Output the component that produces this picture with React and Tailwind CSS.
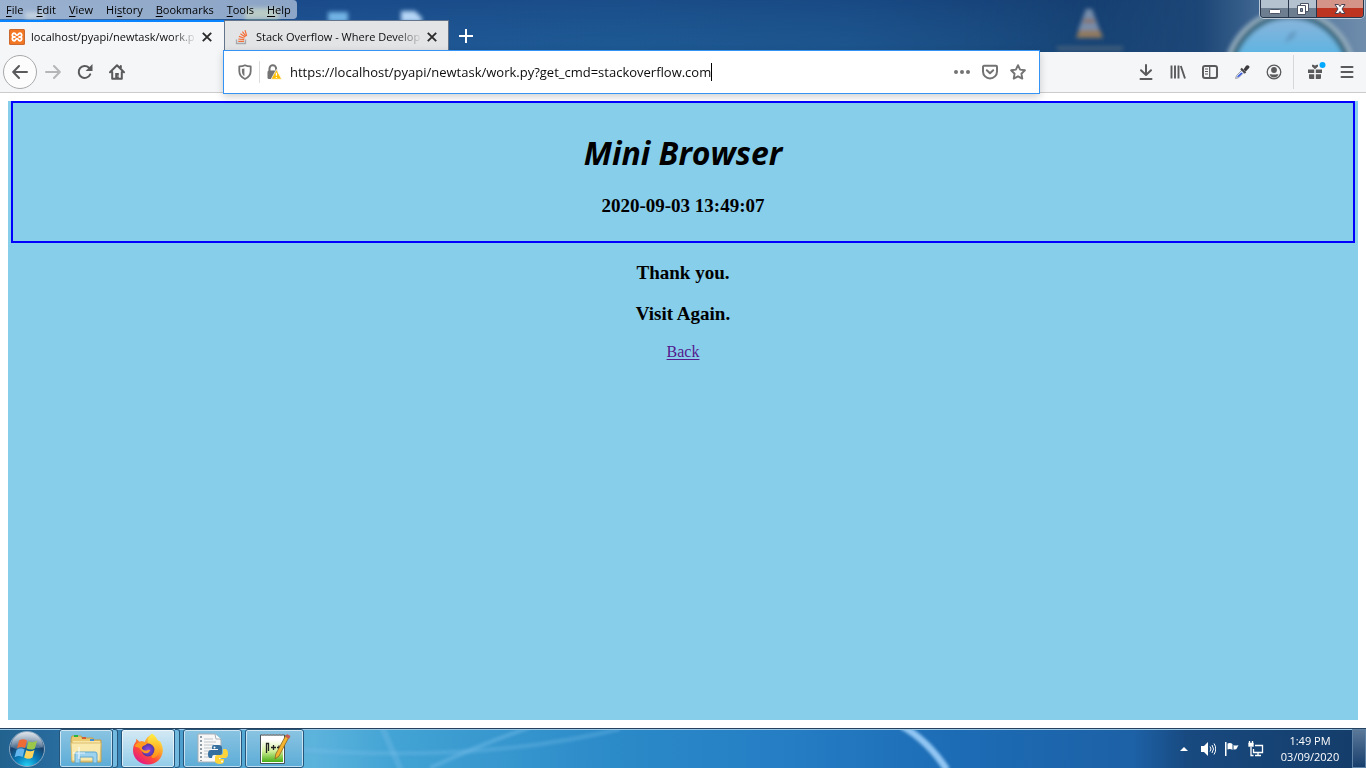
const menus = ['File', 'Edit', 'View', 'History', 'Bookmarks', 'Tools', 'Help'];
const hotkeys = [0, 0, 0, 2, 0, 0, 0];

function TitleWallpaper() {
  return (
    <svg className="absolute inset-0 h-full w-full" viewBox="0 0 1366 52" preserveAspectRatio="none" aria-hidden="true">
      <defs>
        <linearGradient id="sky" x1="0" x2="1" y1="0" y2="0">
          <stop offset="0" stopColor="#4f7eb4" />
          <stop offset="0.2" stopColor="#1d4f90" />
          <stop offset="0.45" stopColor="#1c548f" />
          <stop offset="0.62" stopColor="#1b4f88" />
          <stop offset="0.8" stopColor="#164071" />
          <stop offset="0.88" stopColor="#1d4777" />
          <stop offset="0.94" stopColor="#50759d" />
          <stop offset="1" stopColor="#6f8cab" />
        </linearGradient>
        <linearGradient id="shade" x1="0" x2="0" y1="0" y2="1">
          <stop offset="0" stopColor="#143a78" stopOpacity="0.25" />
          <stop offset="1" stopColor="#2a7ab0" stopOpacity="0.15" />
        </linearGradient>
        <linearGradient id="shadeFade" x1="0" x2="1" y1="0" y2="0">
          <stop offset=".8" stopColor="#fff" />
          <stop offset="1" stopColor="#000" />
        </linearGradient>
        <mask id="shadeMask"><rect width="1200" height="52" fill="url(#shadeFade)" /></mask>
        <linearGradient id="glass" x1="0" x2="0" y1="0" y2="1">
          <stop offset="0" stopColor="#8db5dc" />
          <stop offset=".35" stopColor="#5ab4e2" />
          <stop offset="1" stopColor="#4aaee0" />
        </linearGradient>
        <filter id="soft" x="-30%" y="-30%" width="160%" height="160%"><feGaussianBlur stdDeviation="2" /></filter>
      </defs>
      <rect width="1366" height="52" fill="url(#sky)" />
      <rect width="1200" height="52" fill="url(#shade)" mask="url(#shadeMask)" />
      <g filter="url(#soft)">
        <rect x="328" y="12" width="20" height="10" fill="#72b3e4" />
        <path d="M401 11h14l7 7v4h-21z" fill="#b5d5f5" />
        <rect x="25" y="12" width="20" height="7" fill="#b3c9d4" />
        <rect x="245" y="8" width="34" height="11" fill="#9cb98b" />
        <g opacity=".8">
          <path d="M1086 9h6l8 22h-22z" fill="#8fa1b9" />
          <path d="M1084 19h10l2 4h-14z" fill="#a57e5d" />
          <path d="M1079 30h21l3 8h-27z" fill="#b18a5c" />
        </g>
        <rect x="1057" y="46" width="66" height="5" fill="#3e5c7a" />
        <circle cx="1290" cy="75" r="59" fill="url(#glass)" stroke="#3d6c83" strokeWidth="6" />
        <circle cx="1290" cy="75" r="64" fill="none" stroke="#99b1c0" strokeWidth="4" />
        <path d="M1284 43l6-10 7-3-3 8z" fill="#5b8fb6" opacity=".7" />
      </g>
    </svg>
  );
}

function WindowControls() {
  return (
    <div className="ml-auto mr-0.5 flex h-[18px] w-[104px] overflow-hidden rounded-b-[4px] border border-t-0 border-[#28374c] shadow-[0_0_0_1px_#b9c7d6]">
      <button aria-label="Minimize" className="flex w-7 items-center justify-center border-r border-[#28374c] bg-linear-to-b from-[#b4c1ce] from-45% to-[#6d7e91] to-50%">
        <svg width="14" height="14" viewBox="0 0 14 14"><rect x="1.500" y="7.500" width="11" height="4" rx="1" fill="#fff" stroke="#4b5566" /></svg>
      </button>
      <button aria-label="Restore" className="flex w-7 items-center justify-center border-r border-[#28374c] bg-linear-to-b from-[#b4c1ce] from-45% to-[#6d7e91] to-50%">
        <svg width="14" height="14" viewBox="0 0 14 14" stroke="#4b5566"><path d="M4.500 1.500h8v8h-8z" fill="#fff" /><path d="M1.500 3.500h8v9h-8z" fill="#fff" /><path d="M4.500 6.500h2v3h-2z" fill="#8593a5" /></svg>
      </button>
      <button aria-label="Close window" className="flex flex-1 items-center justify-center bg-linear-to-b from-[#d59488] from-45% to-[#bd3520] to-50%">
        <svg width="14" height="14" viewBox="0 0 14 14"><path d="M2 2.500h3.500l1.500 2 1.500-2H12L9 7l3 4.500H8.500L7 9.500l-1.500 2H2L5 7z" fill="#fff" stroke="#4a4250" /></svg>
      </button>
    </div>
  );
}

function CloseIcon() {
  return <svg width="12" height="12" viewBox="0 0 12 12"><path d="M1.800 1.800l8.400 8.400M10.200 1.800l-8.400 8.400" stroke="#2b2b2c" strokeWidth="1.900" /></svg>;
}

function XamppIcon() {
  return (
    <svg className="shrink-0" width="16" height="16" viewBox="0 0 16 16">
      <rect width="16" height="16" rx="1.500" fill="#f37623" />
      <rect x=".5" y=".5" width="15" height="15" rx="1.500" fill="none" stroke="#c96a35" />
      <path d="M5 4.200a2 2 0 0 0-1.200 3.300M11 4.200a2 2 0 0 1 1.200 3.300M5 11.800a2 2 0 0 1-1-3.500M11 11.800a2 2 0 0 0 1-3.500M5 4.200c1.600 0 1.600 2 3 2s1.400-2 3-2M5 11.800c1.600 0 1.600-2.200 3-2.200s1.400 2.200 3 2.200M3.900 8H6M10 8h2.100" fill="none" stroke="#fff" strokeWidth="1.800" strokeLinecap="round" />
    </svg>
  );
}

function StackIcon() {
  return (
    <svg className="shrink-0" width="16" height="16" viewBox="0 0 16 16" fill="none">
      <path d="M2.500 10.500v4h9v-4" stroke="#a6a8ab" strokeWidth="1.300" />
      <path d="M4.200 12.300h5.900M4.300 10l5.900.6M4.900 7.400l5.600 1.900M6.400 4.700l4.800 3.400M8.400 2.600l3.600 4.700M11 1.200l1.700 5.600" stroke="#f4703a" strokeWidth="1.200" />
    </svg>
  );
}

function Tab({ title, icon, active }) {
  return (
    <div className={active
      ? 'flex h-8 w-56 items-center border-t-2 border-[#0a84ff] bg-[#f5f6f7] pl-[9px] pr-[11px]'
      : 'flex h-8 w-[225px] items-center border-x border-t border-[#64748b] bg-[#e3e4e6] pl-[9px] pr-2.5'}>
      {icon}
      <button role="tab" aria-selected={active} className="ml-1.5 flex-1 overflow-hidden whitespace-nowrap text-left text-[11px] leading-4 text-[#0c0c0d] mask-r-from-85% mask-r-to-100%">{title}</button>
      <button aria-label={`Close ${title}`} className="ml-1"><CloseIcon /></button>
    </div>
  );
}

function NavButton({ label, children }) {
  return <button aria-label={label} className="flex h-8 w-8 items-center justify-center text-[#5a5a5c]">{children}</button>;
}

function Toolbar() {
  const line = { fill: 'none', stroke: 'currentColor', strokeWidth: 2, strokeLinecap: 'round', strokeLinejoin: 'round' };
  return (
    <div className="relative flex h-[41px] items-center border-b border-[#cccccc] bg-[#f5f6f7]">
      <div className="flex w-[223px] shrink-0 items-center pl-[3px]">
        <button aria-label="Back" className="flex h-[34px] w-[34px] items-center justify-center rounded-full border border-[#a9a9aa] bg-[#fcfcfd] text-[#5a5a5c]">
          <svg width="16" height="16" viewBox="0 0 16 16" {...line}><path d="M15 8H1.500M7 2L1.200 8 7 14" /></svg>
        </button>
        <button aria-label="Forward" className="flex h-8 w-8 items-center justify-center text-[#b5b6b8]">
          <svg width="16" height="16" viewBox="0 0 16 16" {...line}><path d="M1 8h13.500M9 2l5.800 6L9 14" /></svg>
        </button>
        <NavButton label="Reload">
          <svg width="16" height="16" viewBox="0 0 16 16"><path d="M13.200 10.400A6 6 0 1 1 12 3.700l1.300 1.400" {...line} /><path d="M15.500 0v7H8.600z" fill="currentColor" /></svg>
        </NavButton>
        <NavButton label="Home">
          <svg width="16" height="16" viewBox="0 0 16 16"><path d="M1 8.200l7-7 7 7M3.200 8v6.800h9.600V8M11.800 4V2" {...line} /><path d="M6.200 9h3.600v6H6.200z" fill="currentColor" /><path d="M8.600 11.500h1v1h-1z" fill="#fff" /></svg>
        </NavButton>
      </div>

      <div className="z-10 flex h-11 min-w-0 flex-1 items-center border border-[#3593f5] bg-white pl-[13px] pr-[7px] text-[#737374] shadow-[0_3px_8px_rgba(0,0,0,0.18)]">
        <button aria-label="Tracking protection" className="pr-1.5">
          <svg width="16" height="16" viewBox="0 0 16 16"><path d="M8 1.200c2 1 4 1.100 5.700 1.100V7c0 3.700-2.200 6.400-5.700 8-3.500-1.600-5.700-4.300-5.700-8V2.300C4 2.300 6 2.200 8 1.200z" fill="none" stroke="currentColor" strokeWidth="1.800" strokeLinejoin="round" /><path d="M7.400 4.200v8C5.600 10.900 4.900 9.200 4.900 7V4.700c.9 0 1.700-.1 2.500-.5z" fill="currentColor" /></svg>
        </button>
        <span className="h-[22px] w-px bg-[#dcdcdd]" />
        <button aria-label="Connection not secure" className="ml-1.5">
          <svg width="16" height="16" viewBox="0 0 16 16"><path d="M3.500 7V4.600a3.300 3.300 0 0 1 6.600 0V7" fill="none" stroke="currentColor" strokeWidth="2" /><rect x="1.500" y="6.500" width="10.500" height="8.500" rx="1.500" fill="currentColor" /><path d="M10.400 5.500l5.300 9.700H5.100z" fill="#ffbf00" stroke="#fff" strokeWidth=".7" strokeLinejoin="round" /><path d="M10.400 8.700v3M10.400 12.900v1.200" stroke="#fff" strokeWidth="1.300" /></svg>
        </button>
        <input aria-label="Address" defaultValue="https://localhost/pyapi/newtask/work.py?get_cmd=stackoverflow.com" className="ml-2 min-w-0 field-sizing-content bg-transparent text-[13px] leading-5 text-[#0c0c0d] outline-none" />
        <span className="h-[18px] w-px bg-black" />
        <button aria-label="Page actions" className="ml-auto flex h-7 w-7 items-center justify-center"><svg width="16" height="16" viewBox="0 0 16 16" fill="currentColor"><circle cx="2" cy="8" r="2" /><circle cx="8" cy="8" r="2" /><circle cx="14" cy="8" r="2" /></svg></button>
        <button aria-label="Save to Pocket" className="flex h-7 w-7 items-center justify-center"><svg width="16" height="16" viewBox="0 0 16 16" {...line}><path d="M2 1.800h12a1 1 0 0 1 1 1V7.400a7 7 0 0 1-14 0V2.800a1 1 0 0 1 1-1z" /><path d="M4.800 6.200L8 9.200l3.200-3" /></svg></button>
        <button aria-label="Bookmark this page" className="flex h-7 w-7 items-center justify-center"><svg width="16" height="16" viewBox="0 0 16 16"><path d="M8 1.200l2.100 4.400 4.800.7-3.500 3.400.9 4.900L8 12.300l-4.300 2.300.9-4.900L1.100 6.300l4.800-.7z" fill="none" stroke="currentColor" strokeWidth="1.900" strokeLinejoin="round" /></svg></button>
      </div>

      <div className="flex w-[326px] shrink-0 items-center justify-end pr-[3px]">
        <NavButton label="Downloads"><svg width="16" height="16" viewBox="0 0 16 16" {...line}><path d="M8 1v9.500M3 6.200l5 4.800 5-4.800M2.500 15h11" /></svg></NavButton>
        <NavButton label="Library"><svg width="16" height="16" viewBox="0 0 16 16" fill="none" stroke="currentColor" strokeWidth="1.900"><path d="M1.500 1.500v13M5 1.500v13M8.500 1.500v13M10.800 2l4.200 12.500" /></svg></NavButton>
        <NavButton label="Sidebars"><svg width="16" height="16" viewBox="0 0 16 16" fill="none" stroke="currentColor"><rect x="1" y="2" width="14" height="12" rx="2" strokeWidth="2" /><path d="M7.700 2v12" strokeWidth="1.300" /><path d="M3 5h3M3 7.500h3M3 10h3" /></svg></NavButton>
        <NavButton label="Pick a color"><svg width="16" height="16" viewBox="0 0 16 16"><path d="M1.500 14.500l1-3 6-6 2.200 2.200-6 6z" fill="#dce6fb" stroke="#a0a3aa" /><path d="M3 13.300l.8-1.500 3.500-3.400 1.200 1-3.500 3.400z" fill="#3658e0" /><path d="M7 4.500L11.500 9" stroke="#48484a" strokeWidth="2.200" /><path d="M9.500 5.500l2.200-3.200c1.200-2.200 4.600-.6 3.600 1.500l-3.500 3.800z" fill="#3c3c40" /></svg></NavButton>
        <NavButton label="Account"><svg width="16" height="16" viewBox="0 0 16 16"><circle cx="8" cy="8" r="6.800" fill="none" stroke="currentColor" strokeWidth="1.300" /><circle cx="8" cy="6" r="2.900" fill="currentColor" /><path d="M3.500 10.500c2-.7 1.800 0 4.500 0s2.500-.7 4.500 0C11.500 12.600 10 13.500 8 13.500s-3.500-.9-4.500-3z" fill="currentColor" /></svg></NavButton>
        <span className="ml-[3px] mr-[5px] h-[34px] w-px bg-[#d7d7db]" />
        <NavButton label="What's new"><svg className="overflow-visible" width="16" height="16" viewBox="0 0 16 16" fill="currentColor"><path d="M1 5.500h6.200V9H1zM8.800 5.500H15V9H8.800zM2 10.200h5.200V15H3a1 1 0 0 1-1-1zM8.800 10.200H14V14a1 1 0 0 1-1 1H8.800zM5 .8q2-.6 3 1 1-1.600 3-1v1.700L8 5.300 5 2.500z" /><circle cx="15.500" cy="1" r="3" fill="#00a8ff" /></svg></NavButton>
        <NavButton label="Open menu"><svg width="16" height="16" viewBox="0 0 16 16" {...line}><path d="M2.500 3h11M2.500 8h11M2.500 13h11" /></svg></NavButton>
      </div>
    </div>
  );
}

function StartOrb() {
  return (
    <svg width="38" height="38" viewBox="0 0 38 38">
      <defs>
        <radialGradient id="orb" cx=".5" cy="1" r=".95"><stop offset="0" stopColor="#25d5f7" /><stop offset=".35" stopColor="#087dbb" /><stop offset=".7" stopColor="#17426d" /><stop offset="1" stopColor="#718ba5" /></radialGradient>
        <linearGradient id="shine" x1="0" x2="0" y1="0" y2="1"><stop offset="0" stopColor="#fff" stopOpacity=".75" /><stop offset="1" stopColor="#fff" stopOpacity=".18" /></linearGradient>
      </defs>
      <circle cx="19" cy="19" r="17.500" fill="url(#orb)" stroke="#8ca9c2" />
      <path d="M3 17a16 15 0 0 1 32 0c-8 3-12-2-18 1-5 2-10 1-14-1z" fill="url(#shine)" />
      <path d="M11 10.500c3-1.700 5.500-1.500 8 0l-2 7.500c-2.500-1.400-5-1.500-8 .2z" fill="#ee6b35" />
      <path d="M20.500 11.200c3 1.400 5.500 1.400 8.500-.4l-2.100 7.600c-2.800 1.600-5.500 1.500-8.300.1z" fill="#9bc849" />
      <path d="M8.600 19.800c3-1.700 5.400-1.500 8-.2l-2 7.400c-2.600-1.500-5-1.500-8 .2z" fill="#63b7ee" />
      <path d="M18.200 20.300c2.800 1.400 5.500 1.400 8.300-.2l-2 7.500c-3 1.700-5.500 1.500-8.400 0z" fill="#fed45c" />
    </svg>
  );
}

function ExplorerIcon() {
  return (
    <svg width="34" height="32" viewBox="0 0 34 32">
      <path d="M2 6l1-3h9l1 2h11l1 2h7v22H3z" fill="#eacb71" stroke="#c29f4c" />
      <path d="M4 8h27v14H4z" fill="#f7e6a4" />
      <rect x="5" y="2" width="4" height="2" fill="#27b43f" /><rect x="13" y="4" width="4" height="2" fill="#d45c2d" /><rect x="21" y="6" width="4" height="2" fill="#3e91df" />
      <path d="M2 10h30l-1 18H3z" fill="#f9e9ad" stroke="#dcbf70" />
      <path d="M6 30V21q0-2 2-2h18q2 0 2 2v9h-4v-6H11v6z" fill="#9ed3ef" stroke="#5fa6ce" />
      <path d="M10 14v12M4 20h12" stroke="#fff" strokeWidth="1.200" opacity=".8" />
    </svg>
  );
}

function FirefoxIcon() {
  return (
    <svg width="32" height="32" viewBox="0 0 32 32">
      <defs>
        <linearGradient id="flame" x1=".85" x2=".2" y1=".05" y2=".95"><stop offset="0" stopColor="#fff44f" /><stop offset=".35" stopColor="#ffa52c" /><stop offset=".65" stopColor="#ff4b39" /><stop offset="1" stopColor="#e31587" /></linearGradient>
        <linearGradient id="gold" x1="0" x2="0" y1="0" y2="1"><stop offset="0" stopColor="#fff045" /><stop offset="1" stopColor="#ff8b16" /></linearGradient>
        <radialGradient id="globe"><stop offset="0" stopColor="#8d48f0" /><stop offset="1" stopColor="#52379e" /></radialGradient>
      </defs>
      <path d="M20 .8c4 2.500 4 4.500 6 7 2-.2 2.500 1 3.200 2.500 1.200 3 1.800 5 1.600 8C30 26 24 31.500 16 31.500S1 25.500 1 17.500c0-4 1-6.500 3-9l.3-2.800 3.200 3c2-.8 4-.6 5.500.3C13.500 5.500 17 3 20 .8z" fill="url(#flame)" />
      <path d="M20 .8c4 2.500 4 4.500 6 7 4 6 2.500 14-3.500 17-3 1-4-1-1-5 3-5-1-9-5.500-10C15 6 18 3.500 20 .8z" fill="url(#gold)" />
      <circle cx="16" cy="17" r="6.400" fill="url(#globe)" />
      <path d="M2.500 13C5 9 10 8 15 10c-1 2.500-3 2.700-4.800 3.200-1 2 .3 4 3 4.300 2 .2 3-1.300 5-.6-.8 3-3.800 4-6.200 3C8.500 18 8.500 14 4 14z" fill="#ff9920" />
    </svg>
  );
}

function PythonIcon() {
  return (
    <svg width="32" height="32" viewBox="0 0 32 32">
      <path d="M1 1h17l6 6v22H1z" fill="#f7f7f7" stroke="#a8afb4" />
      <path d="M18 1l1 5h5" fill="#fff" stroke="#a8afb4" />
      <path d="M4 3v25" stroke="#8f9ba4" strokeWidth="2" strokeDasharray="2 2" />
      <path d="M7 6h9M7 9h12M7 12h10M7 15h10M7 18h6M7 21h5M7 24h7" stroke="#bfc5c9" />
      <path d="M17 12h5q3 0 3 3v5q0 2-2 2h-6q-2 0-2 3h-2q-2 0-2-4t3-4h7v-1h-6v-2q0-2 2-2z" fill="#346f9f" />
      <path d="M26 16h2q3 0 3 4.500T28 25h-6v1h5v2q0 3-4 3-5 0-5-3v-4q0-2 2-2h4q2 0 2-3z" fill="#ffd43b" />
      <circle cx="17.500" cy="14.500" r="1" fill="#fff" /><circle cx="25" cy="28.500" r="1" fill="#fff" />
    </svg>
  );
}

function NotepadIcon() {
  return (
    <svg width="32" height="32" viewBox="0 0 32 32">
      <defs><linearGradient id="leaf" x1="0" x2="0" y1="0" y2="1"><stop offset="0" stopColor="#fff" /><stop offset=".5" stopColor="#d4f09b" /><stop offset="1" stopColor="#48ad12" /></linearGradient></defs>
      <path d="M1.500 2h24v28.500h-24z" fill="#fff" stroke="#475056" />
      <path d="M3 7h21v22H3z" fill="url(#leaf)" />
      <path d="M3 2h21" stroke="#8e9599" strokeWidth="2" strokeDasharray="2 1" />
      <path d="M7.500 20V10.500h2V18M12 14.500h5M14.500 12v5M18 14.500h4M20 12.500v4" stroke="#222" strokeWidth="1.300" fill="none" />
      <path d="M27 2l3 2-10 19-4 3 .8-5z" fill="#f4b52e" stroke="#8a6522" strokeWidth=".8" /><path d="M28 1l3.500 2-1.500 3-3.400-2z" fill="#c75b56" />
    </svg>
  );
}

function TaskButton({ label, active, stacked, children }) {
  return (
    <div className="flex">
      <button aria-label={label} className={`${stacked ? 'w-[54px]' : 'w-[59px]'} ${active ? 'from-[#d4e9f4] to-[#92cce9]' : 'from-[#8ac4e2] to-[#5cacd7]'} flex h-[39px] items-center justify-center rounded-[3px] border border-[#25557b] bg-linear-to-b shadow-[inset_0_0_0_1px_rgba(255,255,255,0.6)]`}>{children}</button>
      {stacked && <span className="h-[39px] w-[5px] rounded-r-[3px] border-y border-r border-[#25557b] bg-[#72b9df]" />}
    </div>
  );
}

function Taskbar() {
  return (
    <footer className="relative flex h-10 items-center overflow-hidden border-t border-[#26425f] bg-[#2079bd]">
      <svg className="absolute inset-0 h-full w-full" viewBox="0 0 1366 40" preserveAspectRatio="none" aria-hidden="true">
        <defs>
          <linearGradient id="bar" x1="0" x2="1" y1="0" y2="0">
            <stop offset="0" stopColor="#22628f" /><stop offset=".04" stopColor="#286b9d" /><stop offset=".12" stopColor="#4a9cca" /><stop offset=".23" stopColor="#5cb3dc" /><stop offset=".29" stopColor="#42a3d4" /><stop offset=".45" stopColor="#2b8ac8" /><stop offset=".58" stopColor="#257dc4" /><stop offset=".7" stopColor="#1c6cb5" /><stop offset=".83" stopColor="#1d61a6" /><stop offset=".87" stopColor="#18497f" /><stop offset="1" stopColor="#143c69" />
          </linearGradient>
          <filter id="glow" x="-20%" y="-50%" width="140%" height="200%"><feGaussianBlur stdDeviation="1.500" /></filter>
        </defs>
        <rect width="1366" height="40" fill="url(#bar)" />
        <g fill="none" filter="url(#glow)" stroke="#80c4ed">
          <path d="M902-3Q928 12 947 42" stroke="#92c6f3" strokeWidth="7" />
          <path d="M430 40Q475 18 530-2" strokeWidth="4" opacity=".4" />
          <path d="M300 21Q480 35 620 0" strokeWidth="4" opacity=".3" />
          <path d="M382-2L401 42" strokeWidth="6" opacity=".3" />
        </g>
        <path d="M0 .5h1366" stroke="#9bc7e6" />
      </svg>
      <div className="relative flex items-center gap-[3px] pl-2">
        <button aria-label="Start" className="mr-2.5"><StartOrb /></button>
        <TaskButton label="Windows Explorer" stacked><ExplorerIcon /></TaskButton>
        <TaskButton label="Firefox" active stacked><FirefoxIcon /></TaskButton>
        <TaskButton label="Python"><PythonIcon /></TaskButton>
        <TaskButton label="Notepad++"><NotepadIcon /></TaskButton>
      </div>
      <div className="relative ml-auto flex h-full items-center text-white">
        <button aria-label="Show hidden icons" className="w-6"><svg className="mx-auto" width="8" height="8" viewBox="0 0 8 8"><path d="M0 6l4-4 4 4z" fill="#fff" /></svg></button>
        <button aria-label="Volume" className="w-6"><svg className="mx-auto" width="16" height="16" viewBox="0 0 16 16"><path d="M1 5h3l4-4v14l-4-4H1z" fill="#fff" /><path d="M10 5.500q2 2.500 0 5M12 4q3 4 0 8M14 2.500q3.500 5.500 0 11" fill="none" stroke="#fff" /></svg></button>
        <button aria-label="Action center" className="w-6"><svg className="mx-auto" width="16" height="16" viewBox="0 0 16 16" fill="#fff"><path d="M1 1h1.500v14H1zM3.500 2.500q3-1 5 .5v6q-2-1.500-5-.5zM9.500 4q2 1 5 0l-1.500 3q-.5 2-3.500 1.500z" /></svg></button>
        <button aria-label="Network" className="w-6"><svg className="mx-auto" width="16" height="16" viewBox="0 0 16 16" fill="none" stroke="#fff" strokeWidth="1.300"><path d="M7 4.500h7.500v7H5.500V8M7 14.500h6M10 12v2" /><path d="M3 6v8.500h2.500" /><path d="M1 2.500h4V5H1z" fill="#fff" /><path d="M1.500 0v3M4.500 0v3" /></svg></button>
        <button className="w-[84px] text-center text-[11px] leading-4"><span className="block">1:49 PM</span><span className="block">03/09/2020</span></button>
        <button aria-label="Show desktop" className="h-full w-3.5 border border-[#6084a8] bg-linear-to-b from-[#5b7898] to-[#173f6d]" />
      </div>
    </footer>
  );
}

export default function App() {
  return (
    <div className="flex min-h-screen flex-col bg-white font-['Open_Sans','Noto_Sans',sans-serif]">
      <header>
        <div className="relative h-[52px]">
          <TitleWallpaper />
          <div className="relative flex h-5 items-start">
            <nav aria-label="Menu bar" className="flex h-[19px] items-center gap-[13px] rounded-r-[4px] bg-[#cbd6e6]/65 px-1.5">
              {menus.map((m, i) => (
                <button key={m} className="text-[11px] leading-4 text-black">
                  {m.slice(0, hotkeys[i])}<u className="underline-offset-2">{m[hotkeys[i]]}</u>{m.slice(hotkeys[i] + 1)}
                </button>
              ))}
            </nav>
            <WindowControls />
          </div>
          <div role="tablist" className="relative flex h-8 items-center">
            <Tab active title="localhost/pyapi/newtask/work.p" icon={<XamppIcon />} />
            <Tab title="Stack Overflow - Where Develop" icon={<StackIcon />} />
            <button aria-label="New tab" className="ml-[9px]"><svg width="16" height="16" viewBox="0 0 16 16"><path d="M8 1v14M1 8h14" stroke="#fff" strokeWidth="2" /></svg></button>
          </div>
        </div>
        <Toolbar />
      </header>

      <main className="flex flex-1 flex-col p-2 font-['Liberation_Serif',serif] text-black">
        <div className="flex-1 bg-[#87ceeb] px-[3px] text-center">
          <section className="flex flex-col items-center border-2 border-[#0000ff] pb-6 pt-[26px]">
            <h1 className="font-['Comic_Sans_MS','Open_Sans',sans-serif] text-[32px] font-bold italic leading-[48px]">Mini Browser</h1>
            <h3 className="mt-[18px] text-[19px] font-bold leading-[22px]">2020-09-03 13:49:07</h3>
          </section>
          <h3 className="mt-[19px] text-[19px] font-bold leading-[22px]">Thank you.</h3>
          <h3 className="mt-[19px] text-[19px] font-bold leading-[22px]">Visit Again.</h3>
          <a href="#back" className="mt-[18px] inline-block text-base leading-[18px] text-[#551a8b] underline underline-offset-2">Back</a>
        </div>
      </main>
      <Taskbar />
    </div>
  );
}
